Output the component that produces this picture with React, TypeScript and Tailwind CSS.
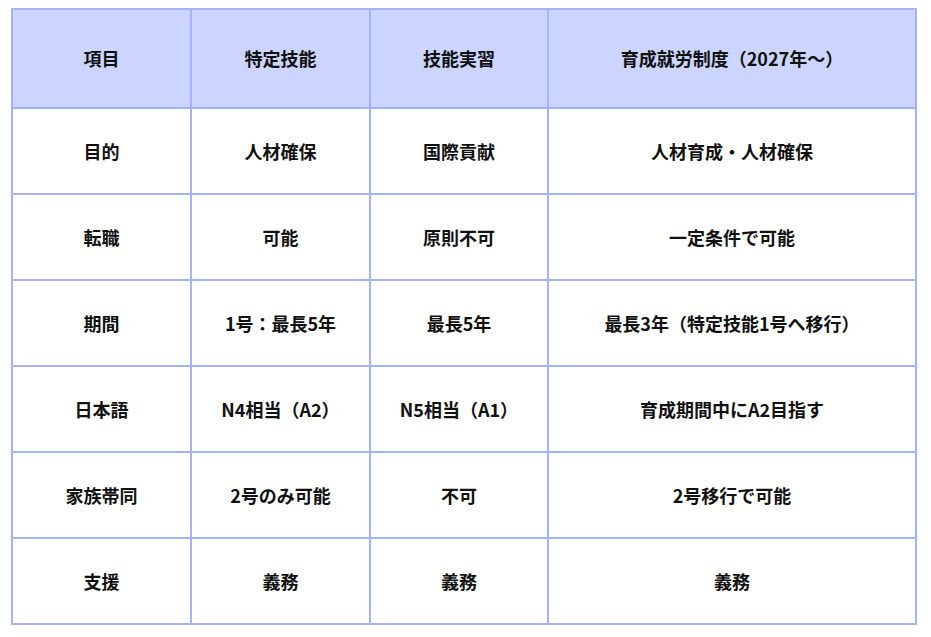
const headers = ["項目", "特定技能", "技能実習", "育成就労制度（2027年〜）"];

const rows = [
  ["目的", "人材確保", "国際貢献", "人材育成・人材確保"],
  ["転職", "可能", "原則不可", "一定条件で可能"],
  ["期間", "1号：最長5年", "最長5年", "最長3年（特定技能1号へ移行）"],
  ["日本語", "N4相当（A2）", "N5相当（A1）", "育成期間中にA2目指す"],
  ["家族帯同", "2号のみ可能", "不可", "2号移行で可能"],
  ["支援", "義務", "義務", "義務"],
];

export default function App() {
  return (
    <div className="bg-white pl-[11px] pt-2 pb-3 font-['Noto_Sans_CJK_JP','Noto_Sans',sans-serif]">
      <table className="w-[904px] table-fixed border-collapse text-[18px] font-bold text-[#111]">
        <colgroup>
          <col className="w-[179px]" />
          <col className="w-[179px]" />
          <col className="w-[178px]" />
          <col className="w-[368px]" />
        </colgroup>
        <thead>
          <tr className="h-[99px] bg-[#ccd5ff]">
            {headers.map((h) => (
              <th key={h} className="border-2 border-[#a3b3ff] text-center font-bold">
                {h}
              </th>
            ))}
          </tr>
        </thead>
        <tbody>
          {rows.map((r) => (
            <tr key={r[0]} className="h-[86px]">
              {r.map((c, i) => (
                <td key={i} className="border-2 border-[#a3b3ff] text-center">
                  {c}
                </td>
              ))}
            </tr>
          ))}
        </tbody>
      </table>
    </div>
  );
}
